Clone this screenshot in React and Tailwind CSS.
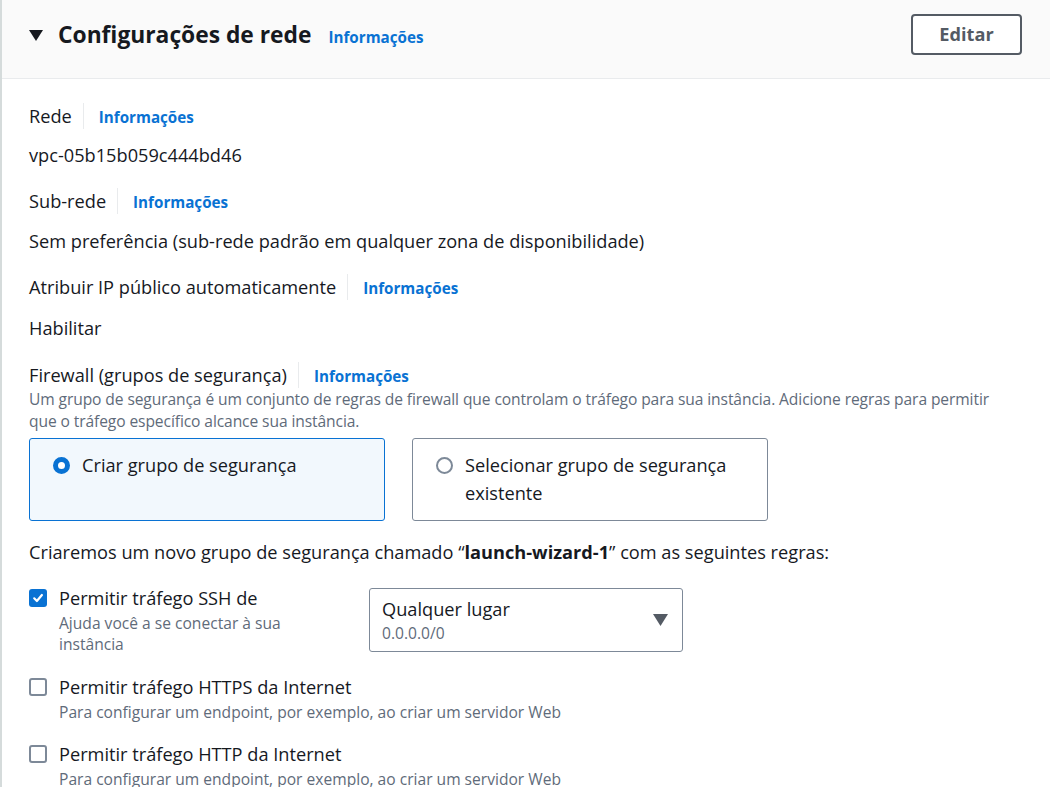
import React from 'react';

const Info = () => (
  <a href="#" className="text-[15.2px] font-bold text-[#0972d3] leading-[22px]">Informações</a>
);

const Label = ({ children }) => (
  <div className="flex items-center h-[26px]">
    <span className="text-[18.2px] text-[#16191f] leading-[26px] pr-[11px] border-r border-[#e9ebed]">{children}</span>
    <span className="pl-[15px] pt-[2px] leading-[22px]"><Info /></span>
  </div>
);

const Checkbox = ({ checked }) =>
  checked ? (
    <span className="block w-[18px] h-[18px] rounded-[3px] bg-[#0972d3] flex items-center justify-center shrink-0">
      <svg width="12" height="12" viewBox="0 0 12 12" fill="none">
        <path d="M2.2 6.3 4.9 9 9.9 3" stroke="white" strokeWidth="2.2" strokeLinecap="round" strokeLinejoin="round" />
      </svg>
    </span>
  ) : (
    <span className="block w-[18px] h-[18px] rounded-[3px] border-2 border-[#7d8998] bg-white shrink-0" />
  );

const Radio = ({ checked }) =>
  checked ? (
    <span className="block w-[17px] h-[17px] rounded-full border-[5px] border-[#0972d3] bg-white shrink-0" />
  ) : (
    <span className="block w-[17px] h-[17px] rounded-full border-2 border-[#7d8998] bg-white shrink-0" />
  );

const RuleRow = ({ checked, title, desc, descWidth, children }) => (
  <div className="flex items-start">
    <div className="w-[340px] flex items-start gap-[12px] shrink-0">
      <div className="pt-[4px]"><Checkbox checked={checked} /></div>
      <div>
        <div className="text-[18.2px] leading-[26px] text-[#16191f] whitespace-nowrap">{title}</div>
        <div className={`text-[15.6px] leading-[21px] text-[#5f6b7a] mt-[2px] ${descWidth}`}>{desc}</div>
      </div>
    </div>
    {children}
  </div>
);

export default function App() {
  return (
    <div className="min-h-[787px] bg-white" style={{ fontFamily: '"Open Sans", "Noto Sans", sans-serif' }}>
      <div className="border-l-2 border-[#d5dbdb] min-h-[787px]">
        {/* Cabeçalho */}
        <div className="h-[79px] bg-[#fafafa] border-b border-[#e9ebed] flex items-start justify-between pl-[27px] pr-[28px]">
          <div className="flex items-center mt-[21px]">
            <svg width="14" height="11" viewBox="0 0 14 11" className="mr-[15px]">
              <path d="M0 0h14L7 11z" fill="#16191f" />
            </svg>
            <h2 className="text-[22.8px] font-bold text-[#16191f] leading-[28px] mr-[17px]">Configurações de rede</h2>
            <span className="pt-[3px]"><Info /></span>
          </div>
          <button className="mt-[14px] w-[111px] h-[41px] border-2 border-[#545b64] rounded-[4px] bg-white text-[18.2px] font-bold text-[#545b64] leading-none">
            Editar
          </button>
        </div>

        {/* Conteúdo */}
        <div className="pl-[27px] pr-[30px] pt-[24px]">
          <Label>Rede</Label>
          <div className="text-[18.2px] leading-[26px] text-[#16191f] mt-[13px]">vpc-05b15b059c444bd46</div>

          <div className="mt-[20px]"><Label>Sub-rede</Label></div>
          <div className="text-[18.2px] leading-[26px] text-[#16191f] mt-[14px]">
            Sem preferência (sub-rede padrão em qualquer zona de disponibilidade)
          </div>

          <div className="mt-[20px]"><Label>Atribuir IP público automaticamente</Label></div>
          <div className="text-[18.2px] leading-[26px] text-[#16191f] mt-[15px]">Habilitar</div>

          <div className="mt-[21px]"><Label>Firewall (grupos de segurança)</Label></div>
          <p className="text-[15.6px] leading-[22px] text-[#5f6b7a] tracking-[-0.1px]">
            Um grupo de segurança é um conjunto de regras de firewall que controlam o tráfego para sua instância. Adicione regras para permitir que o tráfego específico alcance sua instância.
          </p>

          <div className="flex gap-[27px] mt-[6px]">
            <div className="w-[356px] h-[83px] rounded-[3px] border border-[#0972d3] bg-[#f2f8fd] flex items-start gap-[12px] pl-[23px] pt-[12px]">
              <div className="pt-[6px]"><Radio checked /></div>
              <span className="text-[18.2px] leading-[28px] text-[#16191f]">Criar grupo de segurança</span>
            </div>
            <div className="w-[356px] h-[83px] rounded-[3px] border border-[#7d8998] bg-white flex items-start gap-[12px] pl-[23px] pt-[12px]">
              <div className="pt-[6px]"><Radio /></div>
              <span className="text-[18.2px] leading-[28px] text-[#16191f]">
                Selecionar grupo de segurança<br />existente
              </span>
            </div>
          </div>

          <p className="text-[18.2px] leading-[26px] text-[#16191f] mt-[18px]">
            Criaremos um novo grupo de segurança chamado “<b>launch-wizard-1</b>” com as seguintes regras:
          </p>

          <div className="mt-[20px]">
            <RuleRow
              checked
              title="Permitir tráfego SSH de"
              desc="Ajuda você a se conectar à sua instância"
              descWidth="w-[250px]"
            >
              <div className="w-[314px] h-[64px] mt-[3px] border border-[#7d8998] rounded-[3px] flex items-center justify-between pl-[12px] pr-[14px]">
                <div>
                  <div className="text-[18.2px] leading-[24px] text-[#16191f]">Qualquer lugar</div>
                  <div className="text-[15.6px] leading-[20px] text-[#5f6b7a] mt-[2px]">0.0.0.0/0</div>
                </div>
                <svg width="15" height="12" viewBox="0 0 15 12">
                  <path d="M0 0h15L7.5 12z" fill="#545b64" />
                </svg>
              </div>
            </RuleRow>
            <div className="mt-[19px]">
              <RuleRow
                title="Permitir tráfego HTTPS da Internet"
                desc="Para configurar um endpoint, por exemplo, ao criar um servidor Web"
                descWidth="whitespace-nowrap"
              />
            </div>
            <div className="mt-[18px]">
              <RuleRow
                title="Permitir tráfego HTTP da Internet"
                desc="Para configurar um endpoint, por exemplo, ao criar um servidor Web"
                descWidth="whitespace-nowrap"
              />
            </div>
          </div>
        </div>
      </div>
    </div>
  );
}
